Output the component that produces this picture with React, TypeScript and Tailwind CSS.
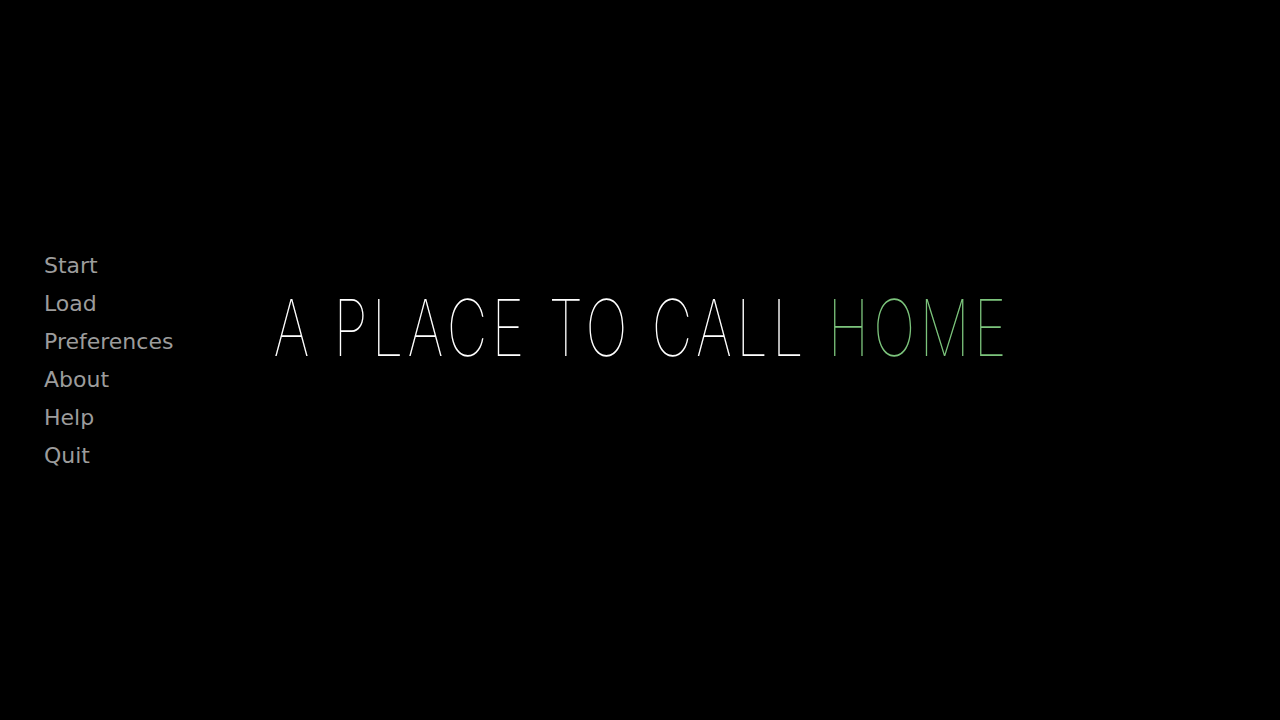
export default function App() {
  const items = ['Start', 'Load', 'Preferences', 'About', 'Help', 'Quit']

  return (
    <div className="grid h-screen w-full bg-black overflow-hidden">
      <nav
        className="col-start-1 row-start-1 self-center justify-self-start pl-11 pt-0.5 flex flex-col"
        style={{ fontFamily: '"DejaVu Sans", sans-serif' }}
      >
        {items.map((item) => (
          <button
            key={item}
            className="text-left text-[22px] leading-[38px] text-[#9c9c9c] hover:text-white"
          >
            {item}
          </button>
        ))}
      </nav>

      <h1
        className="col-start-1 row-start-1 self-center justify-self-center -mt-16 ml-1 whitespace-nowrap text-[78px] leading-none font-thin tracking-[0.075em] text-white scale-x-[0.72]"
        style={{ fontFamily: 'Inter, sans-serif' }}
      >
        A PLACE TO CALL <span className="text-[#7cc47c]">HOME</span>
      </h1>
    </div>
  )
}
